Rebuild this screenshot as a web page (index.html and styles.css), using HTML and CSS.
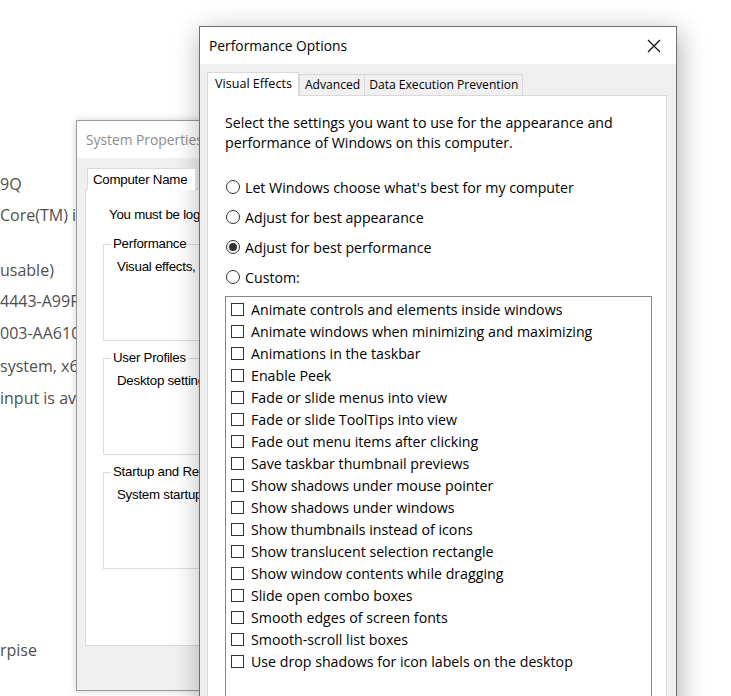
FILE: index.html
```html
<!DOCTYPE html>
<html lang="en">
<head>
<meta charset="utf-8">
<title>Performance Options</title>
<link rel="stylesheet" href="styles.css">
</head>
<body>
<div class="desktop">
  <div class="about">
    <p class="l1">9Q</p>
    <p class="l2">Core(TM) i7-8650U CPU @ 1.90GHz</p>
    <p class="l3">usable)</p>
    <p class="l4">4443-A99F-5C2E8B1D</p>
    <p class="l5">003-AA610</p>
    <p class="l6">system, x64-based processor</p>
    <p class="l7">input is available for this display</p>
    <p class="l8">rpise</p>
  </div>

  <div class="win sysprops">
    <div class="titlebar"><span class="title">System Properties</span></div>
    <div class="winbody">
      <div class="tabs"><span class="tab sel">Computer Name</span></div>
      <div class="panel">
        <p class="note">You must be logged on as an Administrator to make most of these changes.</p>
        <fieldset class="group g1">
          <legend>Performance</legend>
          <p>Visual effects, processor scheduling, memory usage</p>
        </fieldset>
        <fieldset class="group">
          <legend>User Profiles</legend>
          <p>Desktop settings related to your sign-in</p>
        </fieldset>
        <fieldset class="group">
          <legend>Startup and Recovery</legend>
          <p>System startup, system failure, and debugging information</p>
        </fieldset>
      </div>
    </div>
  </div>

  <div class="win perf">
    <div class="titlebar">
      <span class="title">Performance Options</span>
      <svg class="close" width="14" height="14" viewBox="0 0 14 14"><path d="M1 1L13 13M13 1L1 13" stroke="#000" stroke-width="1.1" fill="none"/></svg>
    </div>
    <div class="winbody">
      <div class="tabs">
        <span class="tab sel">Visual Effects</span>
        <span class="tab">Advanced</span>
        <span class="tab">Data Execution Prevention</span>
      </div>
      <div class="panel">
        <p class="intro">Select the settings you want to use for the appearance and performance of Windows on this computer.</p>
        <div class="radios">
          <div class="radio"><span class="dot"></span>Let Windows choose what's best for my computer</div>
          <div class="radio"><span class="dot"></span>Adjust for best appearance</div>
          <div class="radio on"><span class="dot"></span>Adjust for best performance</div>
          <div class="radio"><span class="dot"></span>Custom:</div>
        </div>
        <div class="list">
          <div class="item"><span class="box"></span>Animate controls and elements inside windows</div>
          <div class="item"><span class="box"></span>Animate windows when minimizing and maximizing</div>
          <div class="item"><span class="box"></span>Animations in the taskbar</div>
          <div class="item"><span class="box"></span>Enable Peek</div>
          <div class="item"><span class="box"></span>Fade or slide menus into view</div>
          <div class="item"><span class="box"></span>Fade or slide ToolTips into view</div>
          <div class="item"><span class="box"></span>Fade out menu items after clicking</div>
          <div class="item"><span class="box"></span>Save taskbar thumbnail previews</div>
          <div class="item"><span class="box"></span>Show shadows under mouse pointer</div>
          <div class="item"><span class="box"></span>Show shadows under windows</div>
          <div class="item"><span class="box"></span>Show thumbnails instead of icons</div>
          <div class="item"><span class="box"></span>Show translucent selection rectangle</div>
          <div class="item"><span class="box"></span>Show window contents while dragging</div>
          <div class="item"><span class="box"></span>Slide open combo boxes</div>
          <div class="item"><span class="box"></span>Smooth edges of screen fonts</div>
          <div class="item"><span class="box"></span>Smooth-scroll list boxes</div>
          <div class="item"><span class="box"></span>Use drop shadows for icon labels on the desktop</div>
        </div>
      </div>
    </div>
  </div>
</div>
</body>
</html>
```

FILE: styles.css
```css
* { box-sizing: border-box; margin: 0; padding: 0; }
html, body { width: 731px; height: 696px; overflow: hidden; background: #fff; }
body { font-family: "Open Sans", "Noto Sans", sans-serif; }

.desktop { position: relative; width: 731px; height: 696px; overflow: hidden; }

/* background settings page */
.about { display: flex; flex-direction: column; padding-top: 172px; color: #4f4f4f; font-size: 16px; line-height: 24px; white-space: nowrap; }
.about p { height: 24px; }
.about .l2 { margin-top: 7px; }
.about .l3 { margin-top: 31px; }
.about .l4 { margin-top: 7px; }
.about .l5 { margin-top: 8px; }
.about .l6 { margin-top: 9px; }
.about .l7 { margin-top: 8px; }
.about .l8 { margin-top: 228px; }

/* windows */
.win { position: absolute; display: flex; flex-direction: column; background: #f0f0f0; }
.titlebar { display: flex; align-items: center; background: #fff; height: 37px; flex: none; }
.title { font-size: 13.8px; }
.winbody { display: flex; flex-direction: column; flex: 1; }
.tabs { display: flex; align-items: flex-end; }
.tab { display: block; border: 1px solid #d9d9d9; border-bottom: none; white-space: nowrap; }
.panel { background: #fff; border: 1px solid #d9d9d9; }

/* System Properties (inactive) */
.sysprops { left: 76px; top: 120px; width: 440px; height: 571px; border: 1px solid #9a9a9a; box-shadow: 0 0 8px rgba(0,0,0,.18); font-family: "Liberation Sans", Arial, sans-serif; font-size: 13.3px; letter-spacing: -0.25px; color: #000; }
.sysprops .title { padding-left: 9px; color: #8c8c8c; font-family: "Open Sans", "Noto Sans", sans-serif; letter-spacing: 0; }
.sysprops .winbody { padding: 10px 0 45px 8px; }
.sysprops .tabs { padding-left: 2px; }
.sysprops .tab { height: 22px; padding: 3px 8px 0 5px; background: #fff; margin-bottom: -1px; position: relative; z-index: 1; }
.sysprops .panel { height: 457px; padding: 17px 0 0 23px; display: flex; flex-direction: column; }
.sysprops .note { white-space: nowrap; line-height: 16px; }
.group { margin: 13px 0 0 -6px; height: 105px; border: 1px solid #dcdcdc; padding: 0 0 0 7px; white-space: nowrap; }
.group + .group { margin-top: 9px; }
.group legend { padding: 0 2px; line-height: 16px; }
.group p { margin: 7px 0 0 6px; line-height: 16px; }

/* Performance Options (active) */
.perf { left: 199px; top: 26px; width: 478px; height: 720px; border: 1px solid #6f6f6f; box-shadow: 2px 6px 26px rgba(0,0,0,.32); font-size: 14.2px; color: #000; }
.perf .title { font-size: 13.8px; }
.perf .titlebar { padding: 0 15px 0 9px; justify-content: space-between; }
.perf .close { display: block; }
.perf .winbody { padding: 8px 9px 0 7px; }
.perf .tab { height: 21px; line-height: 19px; font-size: 12.1px; padding: 0 4px; background: #f0f0f0; margin-left: -1px; }
.perf .tab.sel { height: 24px; line-height: 21px; font-size: 12.6px; padding: 0 6px 0 7px; background: #fff; margin: 0 0 -1px 0; position: relative; z-index: 1; }
.perf .tab.sel + .tab { margin-left: 0; padding-left: 5px; }
.perf .panel { flex: 1; padding: 17px 14px 0 17px; }
.intro { line-height: 20px; }
.radios { margin-top: 19px; display: flex; flex-direction: column; }
.radio { display: flex; align-items: center; height: 30px; gap: 5px; }
.dot { width: 14px; height: 14px; border: 1px solid #333; border-radius: 50%; margin-left: 1px; display: flex; align-items: center; justify-content: center; background: #fff; flex: none; }
.radio.on .dot::after { content: ""; width: 8px; height: 8px; border-radius: 50%; background: #333; }
.list { margin-top: 4px; border: 1px solid #828790; padding-top: 1px; height: 420px; }
.item { display: flex; align-items: center; height: 22px; gap: 7px; padding-left: 5px; white-space: nowrap; }
.box { width: 13px; height: 13px; border: 1px solid #333; background: #fff; flex: none; }
```
